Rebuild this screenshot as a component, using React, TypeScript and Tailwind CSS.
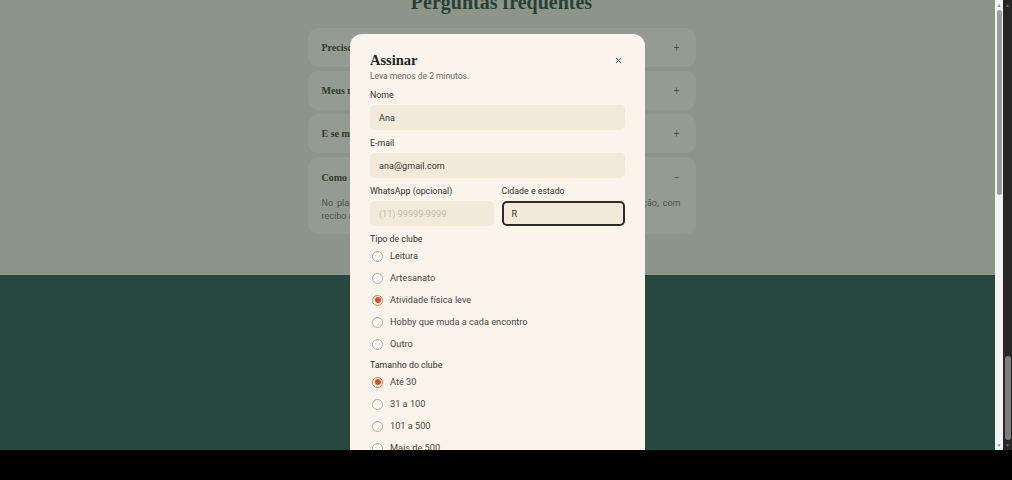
import { X } from 'lucide-react'

const tipos = ['Leitura', 'Artesanato', 'Atividade física leve', 'Hobby que muda a cada encontro', 'Outro']
const tamanhos = ['Até 30', '31 a 100', '101 a 500', 'Mais de 500']

const faqs = [
    'Preciso de CNPJ para assinar?',
    'Meus membros precisam pagar alguma coisa?',
    'E se mudar de ideia depois?',
]

function Radio({ label, checked }: { label: string; checked?: boolean }) {
    return (
        <div className="flex items-center h-[22px] gap-[7px] pl-[2px]">
            <span
                className={
                    checked
                        ? 'w-[11px] h-[11px] rounded-full border border-[#e07a58] bg-[#fbf5ec] flex items-center justify-center'
                        : 'w-[11px] h-[11px] rounded-full border border-[#b3aca5] bg-[#fdfaf5]'
                }
            >
                {checked && <span className="w-[6px] h-[6px] rounded-full bg-[#d4502a]" />}
            </span>
            <span className="text-[9.2px] text-[#4a4744]">{label}</span>
        </div>
    )
}

function Field({ label, value, placeholder, focused }: { label: string; value?: string; placeholder?: string; focused?: boolean }) {
    return (
        <div className="flex flex-col flex-1">
            <label className="text-[8.8px] leading-[12px] text-[#34312d] mb-[4px]">{label}</label>
            <input
                readOnly
                value={value ?? ''}
                placeholder={placeholder}
                className={
                    focused
                        ? 'h-[25px] w-full rounded-[5px] bg-[#f2e9da] border-2 border-[#2c2b28] px-[8px] text-[9.1px] text-[#3a3733] outline-none'
                        : 'h-[25px] w-full rounded-[5px] bg-[#f2e9da] px-[9px] text-[9.1px] text-[#3a3733] placeholder:text-[#c4bbab] outline-none'
                }
            />
        </div>
    )
}

export default function App() {
    return (
        <div className="w-[1012px] h-[480px] bg-black flex flex-col font-['Roboto',sans-serif] overflow-hidden">
            <div className="h-[450px] flex">
                {/* page under the overlay */}
                <div className="relative w-[1003px] h-full overflow-hidden">
                    <div className="bg-[#8c9588] pb-[41px]">
                        <h2 className="-mt-[10px] text-center text-[20px] leading-[24px] font-bold text-[#2a3f34] font-['Liberation_Serif',serif]">
                            Perguntas frequentes
                        </h2>
                        <div className="w-[388px] mx-auto mt-[14px] flex flex-col gap-[4px]">
                            {faqs.map(q => (
                                <div key={q} className="h-[39px] rounded-[10px] bg-[#939c8f] px-[14px] flex items-center justify-between">
                                    <span className="text-[10px] font-bold text-[#2f3b33] font-['Liberation_Serif',serif]">{q}</span>
                                    <span className="text-[10px] text-[#4a5649] pr-[2px]">+</span>
                                </div>
                            ))}
                            <div className="rounded-[10px] bg-[#939c8f] px-[14px] pb-[11px]">
                                <div className="h-[40px] flex items-center justify-between">
                                    <span className="text-[10px] font-bold text-[#2f3b33] font-['Liberation_Serif',serif]">Como funciona o pagamento?</span>
                                    <span className="text-[10px] text-[#4a5649] pr-[2px]">−</span>
                                </div>
                                <p className="text-[9px] leading-[13px] text-[#4c574d]">
                                    <span className="block pr-[1px] [text-align-last:justify]">
                                        No plano anual, o valor total é cobrado uma única vez, em nome da instituição, com
                                    </span>
                                    <span className="block">recibo anual enviado por e-mail logo após a confirmação.</span>
                                </p>
                            </div>
                        </div>
                    </div>
                    <div className="h-[300px] bg-[#27483e]" />

                    {/* modal */}
                    <div className="absolute left-[350px] top-[34px] w-[295px] h-[460px] rounded-[12px] bg-[#faf4eb] px-[20px] pt-[18px]">
                        <div className="flex items-center justify-between">
                            <h3 className="text-[14.5px] leading-[16px] font-bold text-[#1f2a24] font-['Liberation_Serif',serif]">Assinar</h3>
                            <X size={9} strokeWidth={2.6} className="text-[#2f4a3e] mr-[2px]" />
                        </div>
                        <p className="mt-[2px] text-[8.5px] leading-[12px] text-[#6b6660]">Leva menos de 2 minutos.</p>

                        <div className="mt-[7px] flex flex-col gap-[7px]">
                            <Field label="Nome" value="Ana" />
                            <Field label="E-mail" value="ana@gmail.com" />
                            <div className="flex gap-[8px]">
                                <Field label="WhatsApp (opcional)" placeholder="(11) 99999-9999" />
                                <Field label="Cidade e estado" value="R" focused />
                            </div>
                        </div>

                        <div className="mt-[7px]">
                            <div className="text-[8.8px] leading-[12px] text-[#34312d]">Tipo de clube</div>
                            {tipos.map(t => (
                                <Radio key={t} label={t} checked={t === 'Atividade física leve'} />
                            ))}
                        </div>

                        <div className="mt-[4px]">
                            <div className="text-[8.8px] leading-[12px] text-[#34312d]">Tamanho do clube</div>
                            {tamanhos.map(t => (
                                <Radio key={t} label={t} checked={t === 'Até 30'} />
                            ))}
                        </div>
                    </div>

                    {/* overlay scrollbar */}
                    <div className="absolute right-0 top-0 w-[8px] h-full bg-[#f3f3f3] flex flex-col items-center">
                        <span className="mt-[2px] text-[5px] leading-[6px] text-[#8a8a8a]">▲</span>
                        <div className="mt-[2px] w-[5px] h-[185px] rounded-full bg-[#9d9d9d]" />
                        <div className="flex-1" />
                        <span className="mb-[2px] text-[5px] leading-[6px] text-[#8a8a8a]">▼</span>
                    </div>
                </div>

                {/* page scrollbar */}
                <div className="w-[9px] h-full bg-[#262626] flex flex-col items-center">
                    <span className="mt-[2px] text-[5px] leading-[6px] text-[#6d6d6d]">▲</span>
                    <div className="flex-1" />
                    <div className="w-[6px] h-[84px] rounded-full bg-[#7d7d7d] mb-[2px]" />
                    <span className="mb-[2px] text-[5px] leading-[6px] text-[#6d6d6d]">▼</span>
                </div>
            </div>
            <div className="h-[30px] bg-black" />
        </div>
    )
}
